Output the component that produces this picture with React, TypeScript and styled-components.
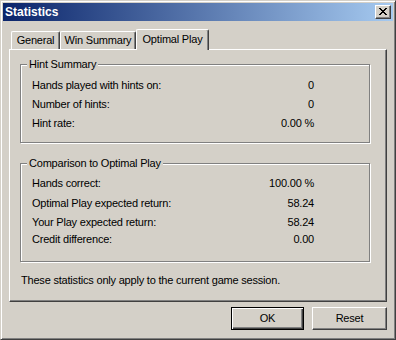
import React from "react";
import styled, { createGlobalStyle } from "styled-components";

const face = "#d4d0c8";

const GlobalStyle = createGlobalStyle`
  html, body { margin: 0; padding: 0; background: ${face}; }
  body { font-family: "Liberation Sans", Arial, sans-serif; font-size: 11px; color: #000; letter-spacing: -0.2px; }
  * { box-sizing: border-box; }
`;

const Window = styled.div`
  width: 396px;
  height: 340px;
  background: ${face};
  border: 1px solid;
  border-color: ${face} #404040 #404040 ${face};
  box-shadow: inset 1px 1px #fff, inset -1px -1px #808080;
  padding: 2px;
  display: flex;
  flex-direction: column;
`;

const TitleBar = styled.div`
  height: 18px;
  display: flex;
  align-items: center;
  justify-content: space-between;
  padding: 0 2px 0 2px;
  background: linear-gradient(to right, #0a246a, #a6caf0);
`;

const Title = styled.span`
  color: #fff;
  font-weight: bold;
  font-size: 12px;
  line-height: 14px;
  letter-spacing: 0;
`;

const CloseButton = styled.div`
  width: 16px;
  height: 14px;
  background: ${face};
  border: 1px solid;
  border-color: #fff #404040 #404040 #fff;
  box-shadow: inset -1px -1px #808080;
  display: flex;
  align-items: center;
  justify-content: center;
  padding: 0 1px 1px 0;
`;

const Body = styled.div`
  flex: 1;
  display: flex;
  flex-direction: column;
  padding: 8px 6px 0 6px;
`;

const TabRow = styled.div`
  display: flex;
  align-items: flex-end;
  height: 20px;
  padding-left: 2px;
  position: relative;
  z-index: 1;
`;

const Tab = styled.div<{ $w: number; $active?: boolean }>`
  width: ${(p) => p.$w}px;
  height: ${(p) => (p.$active ? 21 : 18)}px;
  margin-bottom: ${(p) => (p.$active ? -1 : 0)}px;
  background: ${face};
  border-top: 1px solid #fff;
  border-left: 1px solid #fff;
  border-right: 1px solid #404040;
  box-shadow: inset -1px 0 #808080;
  border-radius: 2px 2px 0 0;
  display: flex;
  align-items: center;
  justify-content: center;
  line-height: 13px;
  white-space: nowrap;
  padding-bottom: ${(p) => (p.$active ? 2 : 0)}px;
`;

const Panel = styled.div`
  height: 253px;
  background: ${face};
  border: 1px solid;
  border-color: #fff #404040 #404040 #fff;
  box-shadow: inset -1px -1px #808080;
  display: flex;
  flex-direction: column;
  padding: 0 0 0 10px;
`;

const Group = styled.div<{ $top: number; $pt: number; $pb: number }>`
  position: relative;
  width: 350px;
  margin-top: ${(p) => p.$top}px;
  border: 1px solid #808080;
  box-shadow: inset 1px 1px #fff, 1px 1px #fff;
  padding: ${(p) => p.$pt}px 55px ${(p) => p.$pb}px 11px;
`;

const Legend = styled.span`
  position: absolute;
  top: -7px;
  left: 6px;
  padding: 0 2px;
  line-height: 13px;
  background: ${face};
`;

const Row = styled.div<{ $h: number }>`
  height: ${(p) => p.$h}px;
  line-height: 19px;
  display: flex;
  justify-content: space-between;
  white-space: nowrap;
`;

const Value = styled.span`
  text-align: right;
`;

const Note = styled.div`
  margin: 12px 0 0 1px;
  line-height: 13px;
  white-space: nowrap;
`;

const ButtonRow = styled.div`
  display: flex;
  justify-content: flex-end;
  gap: 8px;
  margin-top: 5px;
`;

const Button = styled.div<{ $w: number; $default?: boolean }>`
  width: ${(p) => p.$w}px;
  height: 23px;
  background: ${face};
  display: flex;
  align-items: center;
  justify-content: center;
  line-height: 13px;
  border: 1px solid;
  border-color: ${(p) => (p.$default ? "#000" : "#fff #404040 #404040 #fff")};
  box-shadow: ${(p) =>
    p.$default
      ? "inset 1px 1px #fff, inset -1px -1px #404040, inset -2px -2px #808080"
      : "inset -1px -1px #808080"};
`;

const hints: [string, string][] = [
  ["Hands played with hints on:", "0"],
  ["Number of hints:", "0"],
  ["Hint rate:", "0.00 %"],
];

const comparison: [string, string, number][] = [
  ["Hands correct:", "100.00 %", 20],
  ["Optimal Play expected return:", "58.24", 19],
  ["Your Play expected return:", "58.24", 17],
  ["Credit difference:", "0.00", 19],
];

export default function App() {
  return (
    <>
      <GlobalStyle />
      <Window>
        <TitleBar>
          <Title>Statistics</Title>
          <CloseButton>
            <svg width="8" height="7" viewBox="0 0 8 7" shapeRendering="crispEdges">
              <path
                d="M0 0h2v1h-2zM6 0h2v1h-2zM1 1h2v1h-2zM5 1h2v1h-2zM2 2h4v1h-4zM3 3h2v1h-2zM2 4h4v1h-4zM1 5h2v1h-2zM5 5h2v1h-2zM0 6h2v1h-2zM6 6h2v1h-2z"
                fill="#000"
              />
            </svg>
          </CloseButton>
        </TitleBar>
        <Body>
          <TabRow>
            <Tab $w={49}>General</Tab>
            <Tab $w={76}>Win Summary</Tab>
            <Tab $w={73} $active>
              Optimal Play
            </Tab>
          </TabRow>
          <Panel>
            <Group $top={14} $pt={11} $pb={9}>
              <Legend>Hint Summary</Legend>
              {hints.map(([l, v]) => (
                <Row key={l} $h={19}>
                  <span>{l}</span>
                  <Value>{v}</Value>
                </Row>
              ))}
            </Group>
            <Group $top={20} $pt={10} $pb={12}>
              <Legend>Comparison to Optimal Play</Legend>
              {comparison.map(([l, v, h]) => (
                <Row key={l} $h={h}>
                  <span>{l}</span>
                  <Value>{v}</Value>
                </Row>
              ))}
            </Group>
            <Note>These statistics only apply to the current game session.</Note>
          </Panel>
          <ButtonRow>
            <Button $w={73} $default>
              OK
            </Button>
            <Button $w={75}>Reset</Button>
          </ButtonRow>
        </Body>
      </Window>
    </>
  );
}
